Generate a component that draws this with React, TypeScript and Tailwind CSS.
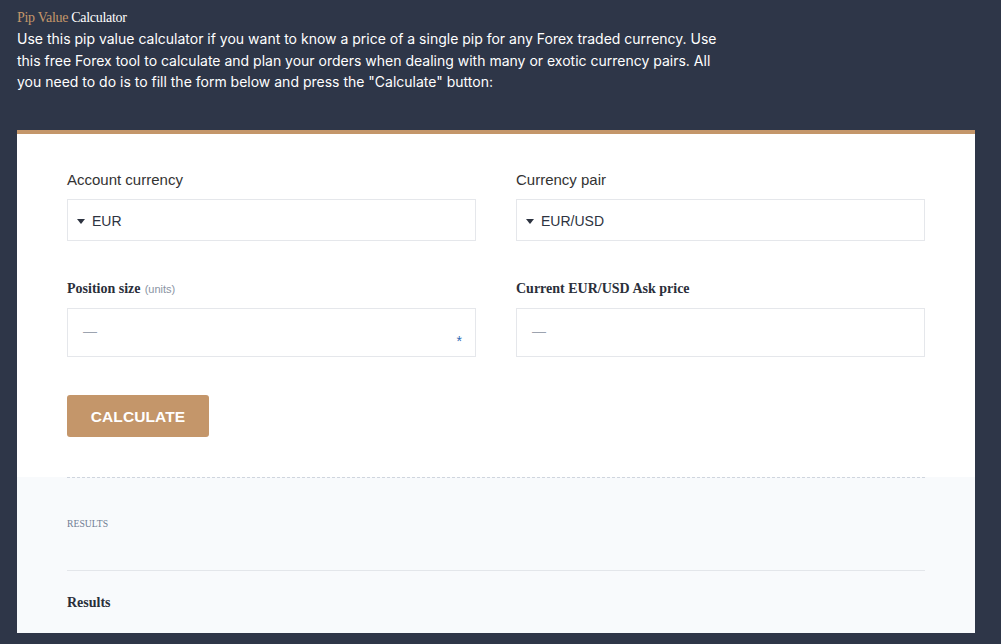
import React from "react";

const sans = { fontFamily: '"Liberation Sans", Arial, sans-serif' };

function Caret() {
  return (
    <svg width="8" height="5" viewBox="0 0 8 5" className="shrink-0">
      <path d="M0 0 L8 0 L4 5 Z" fill="#2d3340" />
    </svg>
  );
}

export default function App() {
  return (
    <div className="min-h-[644px] w-full bg-[#2e3648] pl-[17px] pr-[26px] pt-[9px] pb-[12px]">
      <div className="font-['Liberation_Serif',serif] text-[14px] leading-[18px] tracking-[-0.3px]">
        <span className="text-[#c4966a]">Pip Value</span>{" "}
        <span className="text-white">Calculator</span>
      </div>
      <p className="font-['Inter',sans-serif] text-[14px] leading-[21.5px] pt-[1px] text-white whitespace-nowrap">
        Use this pip value calculator if you want to know a price of a single pip for any Forex traded currency. Use
        <br />
        this free Forex tool to calculate and plan your orders when dealing with many or exotic currency pairs. All
        <br />
        you need to do is to fill the form below and press the "Calculate" button:
      </p>

      <div className="mt-[37px] border-t-4 border-[#c4966a] bg-white">
        <div className="px-[50px] pt-[36px] pb-[40px]">
          <div className="grid grid-cols-2 gap-x-[40px]">
            <div>
              <div style={sans} className="text-[15px] leading-[20px] text-[#333] mb-[9px]">
                Account currency
              </div>
              <div className="h-[42px] border border-[#e5e7eb] flex items-center gap-[7px] pl-[9px] pt-[4px]">
                <Caret />
                <span style={sans} className="text-[14px] text-[#2d3340]">EUR</span>
              </div>
            </div>
            <div>
              <div style={sans} className="text-[15px] leading-[20px] text-[#333] mb-[9px]">
                Currency pair
              </div>
              <div className="h-[42px] border border-[#e5e7eb] flex items-center gap-[7px] pl-[9px] pt-[4px]">
                <Caret />
                <span style={sans} className="text-[14px] text-[#2d3340]">EUR/USD</span>
              </div>
            </div>

            <div className="mt-[36px]">
              <div className="leading-[20px] mb-[9px]">
                <span className="font-['Liberation_Serif',serif] font-bold text-[14px] text-[#2a2f3a]">
                  Position size
                </span>{" "}
                <span style={sans} className="text-[11px] text-[#8a93a3]">(units)</span>
              </div>
              <div className="relative h-[49px] border border-[#e5e7eb] flex items-center pl-[15px]">
                <span style={sans} className="text-[14px] text-[#9ca3af] -mt-[2px]">—</span>
                <span className="absolute right-[13px] top-[25px] text-[14px] leading-[14px] text-[#2f6db5] font-['Liberation_Sans',sans-serif]">
                  *
                </span>
              </div>
            </div>
            <div className="mt-[36px]">
              <div className="leading-[20px] mb-[9px]">
                <span className="font-['Liberation_Serif',serif] font-bold text-[14px] text-[#2a2f3a]">
                  Current EUR/USD Ask price
                </span>
              </div>
              <div className="h-[49px] border border-[#e5e7eb] flex items-center pl-[15px]">
                <span style={sans} className="text-[14px] text-[#9ca3af] -mt-[2px]">—</span>
              </div>
            </div>
          </div>

          <button
            style={sans}
            className="mt-[38px] h-[42px] w-[142px] rounded-[3px] bg-[#c4966a] text-white font-bold text-[15.5px] tracking-[0.1px] pt-[2px]"
          >
            CALCULATE
          </button>
        </div>

        <div className="bg-[#f8fafc] px-[50px]">
          <div className="border-t border-dashed border-[#cfd5de] pt-[40px]">
            <div className="font-['Liberation_Serif',serif] text-[9.7px] leading-[12px] text-[#6f7d93]">RESULTS</div>
            <div className="mt-[40px] border-t border-[#e3e6ea] pt-[24px] pb-[22px]">
              <div className="font-['Liberation_Serif',serif] font-bold text-[14px] leading-[16px] text-[#2a2f3a]">
                Results
              </div>
            </div>
          </div>
        </div>
      </div>
    </div>
  );
}
